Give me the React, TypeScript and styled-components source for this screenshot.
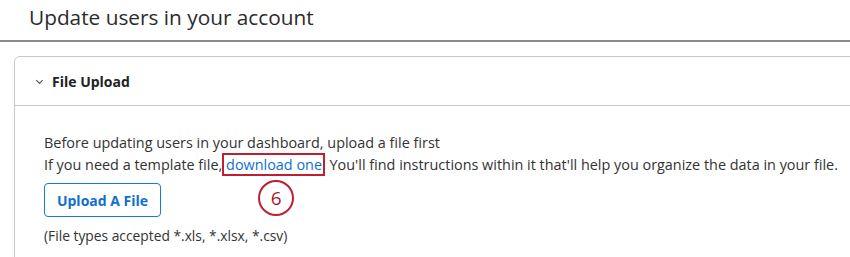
import React from "react";
import styled, { createGlobalStyle } from "styled-components";

const GlobalStyle = createGlobalStyle`
  html, body { margin: 0; padding: 0; background: #fff; }
  body {
    font-family: "Open Sans", "Noto Sans", sans-serif;
    color: #333;
    overflow: hidden;
  }
`;

const Page = styled.div`
  width: 850px;
  height: 257px;
  overflow: hidden;
  background: #fff;
`;

const TitleBar = styled.header`
  height: 42px;
  padding-left: 29px;
  display: flex;
  align-items: center;
  border-bottom: 2px solid #8a8a8a;
  box-sizing: border-box;
`;

const Title = styled.h1`
  margin: 0;
  font-size: 20.8px;
  font-weight: 400;
  color: #2b2b2b;
  line-height: 1;
  transform: translateY(-3px);
`;

const Panel = styled.section`
  margin: 14px -10px 0 14px;
  border: 1px solid #c9c9c9;
  border-radius: 6px 6px 0 0;
`;

const PanelHeader = styled.div`
  height: 48px;
  display: flex;
  align-items: center;
  gap: 8px;
  padding-left: 20px;
  border-bottom: 1px solid #c9c9c9;
  font-size: 14px;
  font-weight: 700;
  color: #222;
`;

const Chevron = styled.svg`
  width: 9px;
  height: 9px;
  color: #555;
`;

const PanelBody = styled.div`
  padding: 26px 0 0 29px;
  height: 160px;
`;

const Line = styled.p`
  margin: 0;
  font-size: 14.42px;
  line-height: 22px;
  color: #333;
  white-space: nowrap;
`;

const LinkWrap = styled.span`
  position: relative;
`;

const Link = styled.a`
  color: #1070d6;
  text-decoration: none;
`;

const Highlight = styled.span`
  position: absolute;
  left: -4px;
  right: -3px;
  top: -2px;
  bottom: -2px;
  border: 2px solid #c01f33;
  pointer-events: none;
`;

const Badge = styled.span`
  position: absolute;
  left: 32px;
  top: 25px;
  width: 32px;
  height: 32px;
  border: 2px solid #c01f33;
  border-radius: 50%;
  display: flex;
  align-items: center;
  justify-content: center;
  font-size: 19px;
  color: #a8192a;
  background: #fff;
`;

const UploadButton = styled.button`
  margin-top: 7px;
  width: 117px;
  height: 34px;
  border: 1px solid #1a7ad9;
  border-radius: 4px;
  background: #fff;
  color: #0f6fd1;
  font-family: inherit;
  font-size: 14px;
  font-weight: 700;
  padding: 0;
  cursor: pointer;
`;

const Note = styled.p`
  margin: 9px 0 0;
  font-size: 13.8px;
  line-height: 20px;
  color: #333;
`;

export default function App() {
  return (
    <Page>
      <GlobalStyle />
      <TitleBar>
        <Title>Update users in your account</Title>
      </TitleBar>
      <Panel>
        <PanelHeader>
          <Chevron viewBox="0 0 10 10" fill="none" stroke="currentColor" strokeWidth="1.3">
            <path d="M1.5 3.5 L5 7 L8.5 3.5" />
          </Chevron>
          File Upload
        </PanelHeader>
        <PanelBody>
          <Line>Before updating users in your dashboard, upload a file first</Line>
          <Line>
            If you need a template file,{" "}
            <LinkWrap>
              <Link href="#">download one</Link>
              <Highlight />
              <Badge>6</Badge>
            </LinkWrap>
            . You'll find instructions within it that'll help you organize the data in your file.
          </Line>
          <UploadButton>Upload A File</UploadButton>
          <Note>(File types accepted *.xls, *.xlsx, *.csv)</Note>
        </PanelBody>
      </Panel>
    </Page>
  );
}
